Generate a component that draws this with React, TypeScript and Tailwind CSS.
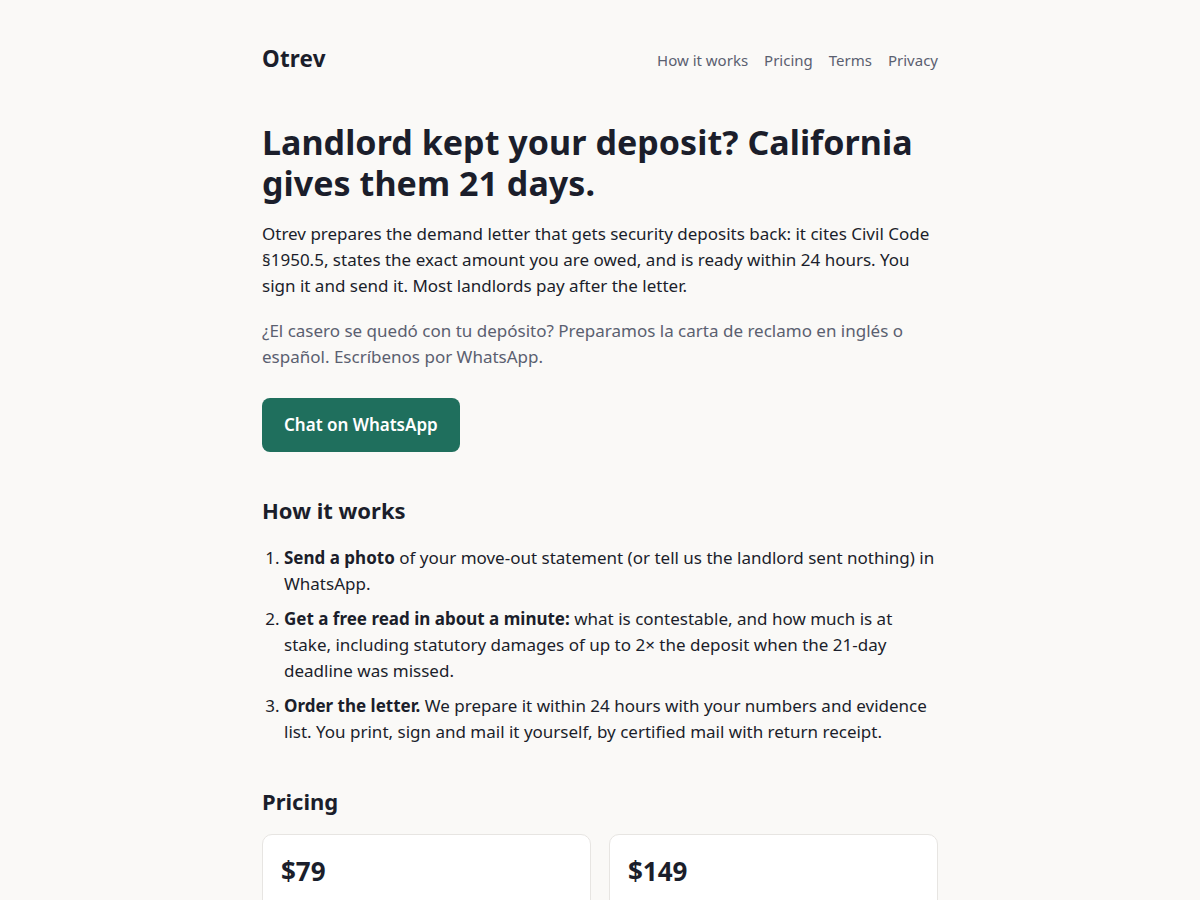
export default function App() {
  return (
    <div className="min-h-screen bg-[#faf9f7] text-[#1b1e2b] font-['Noto_Sans',sans-serif]">
      <div className="mx-auto max-w-[676px] pt-[44px]">
        {/* Header */}
        <header className="flex items-center justify-between h-[30px]">
          <div className="text-[22.4px] font-bold tracking-[0.2px]">Otrev</div>
          <nav className="flex gap-4 text-[15px] text-[#5a6070] pt-[2px]">
            <a href="#how">How it works</a>
            <a href="#pricing">Pricing</a>
            <a href="#terms">Terms</a>
            <a href="#privacy">Privacy</a>
          </nav>
        </header>

        {/* Hero */}
        <h1 className="mt-[48px] text-[34px] font-bold leading-[41px] tracking-[0.05px]">
          Landlord kept your deposit? California gives them 21 days.
        </h1>
        <p className="mt-[17px] text-[17px] leading-[26px]">
          Otrev prepares the demand letter that gets security deposits back: it cites Civil Code
          §1950.5, states the exact amount you are owed, and is ready within 24 hours. You sign it
          and send it. Most landlords pay after the letter.
        </p>
        <p className="mt-[19px] text-[17px] leading-[26px] text-[#5a6070]">
          ¿El casero se quedó con tu depósito? Preparamos la carta de reclamo en inglés o español.
          Escríbenos por WhatsApp.
        </p>
        <a
          href="#wa"
          className="mt-[28px] inline-flex h-[54px] items-center rounded-lg bg-[#1f6f5d] px-[22px] text-[17px] font-semibold text-white"
        >
          Chat on WhatsApp
        </a>

        {/* How it works */}
        <h2 id="how" className="mt-[43px] text-[22px] font-bold leading-[30px]">
          How it works
        </h2>
        <ol className="mt-[20px] list-decimal pl-[22px] text-[17px] leading-[26px] space-y-[9px]">
          <li>
            <strong className="font-bold">Send a photo</strong> of your move-out statement (or tell
            us the landlord sent nothing) in WhatsApp.
          </li>
          <li>
            <strong className="font-bold">Get a free read in about a minute:</strong> what is
            contestable, and how much is at stake, including statutory damages of up to 2× the
            deposit when the 21-day deadline was missed.
          </li>
          <li>
            <strong className="font-bold">Order the letter.</strong> We prepare it within 24 hours
            with your numbers and evidence list. You print, sign and mail it yourself, by certified
            mail with return receipt.
          </li>
        </ol>

        {/* Pricing */}
        <h2 id="pricing" className="mt-[41px] text-[22px] font-bold leading-[30px]">
          Pricing
        </h2>
        <div className="mt-[18px] grid grid-cols-2 gap-[18px]">
          <div className="rounded-[10px] border border-[#e7e5e2] bg-white px-[18px] pt-[18px] pb-6 h-[200px]">
            <div className="text-[26px] font-bold leading-[36px]">$79</div>
          </div>
          <div className="rounded-[10px] border border-[#e7e5e2] bg-white px-[18px] pt-[18px] pb-6 h-[200px]">
            <div className="text-[26px] font-bold leading-[36px]">$149</div>
          </div>
        </div>
      </div>
    </div>
  );
}
